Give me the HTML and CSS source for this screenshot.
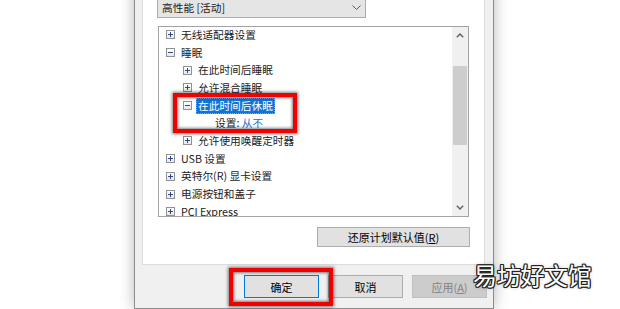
FILE: index.html
```html
<!DOCTYPE html>
<html lang="zh-CN">
<head>
    <meta charset="UTF-8">
    <title>电源选项 - 高级设置</title>
    <link rel="stylesheet" href="styles.css">
</head>
<body>

    <div class="dialog">
        <div class="panel">
            <div class="combo">
                <span>高性能 [活动]</span>
                <svg width="9" height="5" viewBox="0 0 9 5"><polyline points="0.5,0.5 4.5,4.5 8.5,0.5" fill="none" stroke="#5a5a5a" stroke-width="1"/></svg>
            </div>

            <div class="listbox">
                <div class="tree">
                    <div class="row lv0"><i class="tog plus"></i><span class="label">无线适配器设置</span></div>
                    <div class="row lv0"><i class="tog"></i><span class="label">睡眠</span></div>
                    <div class="row lv1"><i class="tog plus"></i><span class="label">在此时间后睡眠</span></div>
                    <div class="row lv1"><i class="tog plus"></i><span class="label">允许混合睡眠</span></div>
                    <div class="row lv1"><i class="tog"></i><span class="label selected">在此时间后休眠</span></div>
                    <div class="row lv2"><span class="label">设置: <a class="value">从不</a></span></div>
                    <div class="row lv1"><i class="tog plus"></i><span class="label">允许使用唤醒定时器</span></div>
                    <div class="row lv0"><i class="tog plus"></i><span class="label">USB 设置</span></div>
                    <div class="row lv0"><i class="tog plus"></i><span class="label">英特尔(R) 显卡设置</span></div>
                    <div class="row lv0"><i class="tog plus"></i><span class="label">电源按钮和盖子</span></div>
                    <div class="row lv0"><i class="tog plus"></i><span class="label">PCI Express</span></div>
                </div>
                <div class="scrollbar">
                    <div class="arrow">
                        <svg width="8" height="5" viewBox="0 0 8 5"><polyline points="0.8,4.2 4,1 7.2,4.2" fill="none" stroke="#606060" stroke-width="1.4"/></svg>
                    </div>
                    <div class="track"><div class="thumb"></div></div>
                    <div class="arrow">
                        <svg width="8" height="5" viewBox="0 0 8 5"><polyline points="0.8,0.8 4,4 7.2,0.8" fill="none" stroke="#606060" stroke-width="1.4"/></svg>
                    </div>
                </div>
            </div>

            <div class="reset-row">
                <button class="btn reset">还原计划默认值(<u>R</u>)</button>
            </div>
        </div>

        <div class="footer">
            <button class="btn default">确定</button>
            <button class="btn">取消</button>
            <button class="btn disabled">应用(<u>A</u>)</button>
        </div>
    </div>

    <!-- red annotation boxes -->
    <div class="mark mark-node"></div>
    <div class="mark mark-ok"></div>

    <div class="watermark">易坊好文馆</div>

</body>
</html>
```

FILE: styles.css
```css
* { margin: 0; padding: 0; box-sizing: border-box; }
body {
    position: relative;
    width: 620px;
    height: 309px;
    overflow: hidden;
    background: #fff;
    font-family: "Noto Sans CJK SC", "Microsoft YaHei", sans-serif;
    font-size: 10.7px;
    color: #1a1a1a;
}

/* Dialog window */
.dialog {
    display: flex;
    flex-direction: column;
    width: 360px;
    height: 349px;
    margin: -40px 0 0 134px;
    background: #f0f0f0;
    border: 1px solid #8c8c8c;
    border-top: 0;
    box-shadow: 0 0 14px rgba(0, 0, 0, 0.28);
}

.panel {
    width: 343px;
    height: 305px;
    margin-left: 7px;
    background: #fff;
    border: 1px solid #dcdcdc;
}

/* Plan combo box */
.combo {
    display: flex;
    align-items: center;
    justify-content: space-between;
    width: 209px;
    height: 22px;
    margin: 35px 0 0 14px;
    padding: 0 4px 0 4px;
    background: #e5e5e5;
    border: 1px solid #adadad;
}

/* Tree list */
.listbox {
    display: flex;
    width: 311px;
    height: 191px;
    margin: 8px 0 0 15px;
    border: 1px solid #a3a3a3;
    background: #fff;
    overflow: hidden;
}

.tree { flex: 1; margin-top: -1px; overflow: hidden; }

.row {
    display: flex;
    align-items: center;
    height: 17.7px;
    white-space: nowrap;
}
.lv0 { padding-left: 7px; }
.lv1 { padding-left: 24px; }
.lv2 { padding-left: 54px; }

.label { padding: 0 2px; line-height: 16px; }
.label.selected {
    background: #0f74d9;
    color: #fff;
    outline: 1px dotted #6fb0ff;
    outline-offset: -1px;
}
.value { color: #2a6fd2; }

.tog {
    position: relative;
    width: 9px;
    height: 9px;
    margin-right: 4px;
    border: 1px solid #919191;
    background: linear-gradient(#fff, #e8e8e8);
}
.tog::before {
    content: "";
    position: absolute;
    left: 1px;
    top: 3px;
    width: 5px;
    height: 1px;
    background: #2f4b86;
}
.tog.plus::after {
    content: "";
    position: absolute;
    left: 3px;
    top: 1px;
    width: 1px;
    height: 5px;
    background: #2f4b86;
}

/* Scrollbar */
.scrollbar {
    display: flex;
    flex-direction: column;
    width: 16px;
    background: #f0f0f0;
}
.arrow {
    display: flex;
    align-items: center;
    justify-content: center;
    height: 17px;
}
.track { flex: 1; padding: 22px 1px 0 1px; }
.thumb { height: 79px; background: #cdcdcd; }

/* Buttons */
.btn {
    height: 23px;
    width: 75px;
    font: inherit;
    font-size: 11px;
    color: #000;
    background: #e1e1e1;
    border: 1px solid #adadad;
}
.btn u { text-underline-offset: 1px; }

.reset-row { margin: 10px 0 0 174px; }
.btn.reset { width: 153px; height: 20px; }

.footer {
    display: flex;
    justify-content: flex-end;
    gap: 9px;
    padding: 10px 6px 0 0;
}
.btn.default { border-color: #0078d7; }
.btn.disabled { background: #cccccc; border-color: #bfbfbf; color: #838383; }

/* Red annotation boxes */
.mark {
    position: absolute;
    border: 4px solid #f20000;
    box-shadow: 0 0 3px 1px rgba(0, 0, 0, 0.5), inset 0 0 3px 1px rgba(0, 0, 0, 0.5);
}
.mark-node { left: 173px; top: 93px; width: 124px; height: 40px; }
.mark-ok { left: 229px; top: 268px; width: 104px; height: 38px; }

/* Site watermark */
.watermark {
    position: absolute;
    left: 473px;
    top: 262px;
    font-size: 24px;
    line-height: 26px;
    letter-spacing: -0.3px;
    color: #fff;
    text-shadow:
        1px 0 0 #222, -1px 0 0 #222, 0 1px 0 #222, 0 -1px 0 #222,
        1px 1px 0 #222, -1px -1px 0 #222, 1px -1px 0 #222, -1px 1px 0 #222,
        0 0 4px rgba(0, 0, 0, 0.4);
}
```
